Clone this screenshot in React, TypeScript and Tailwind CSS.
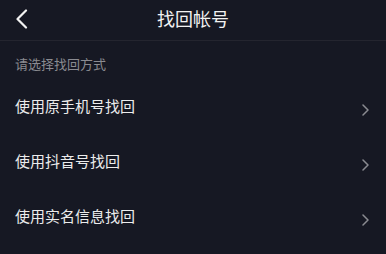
import React from "react";

const options = ["使用原手机号找回", "使用抖音号找回", "使用实名信息找回"];

const font = "font-['Noto_Sans_CJK_SC','Noto_Sans',sans-serif]";

export default function App() {
  return (
    <div className={`w-[386px] h-[254px] bg-[#161823] ${font} overflow-hidden`}>
      <header className="relative flex h-[41px] items-center justify-center border-b border-[#24252f]">
        <svg
          className="absolute left-[15px] top-[9px]"
          width="13"
          height="20"
          viewBox="0 0 13 20"
          fill="none"
        >
          <path d="M11 1.5 L2.5 10 L11 18.5" stroke="#f2f2f2" strokeWidth="2.2" strokeLinecap="round" strokeLinejoin="round" />
        </svg>
        <h1 className="text-[18px] leading-none text-[#f2f2f2] mb-[4px]">找回帐号</h1>
      </header>

      <p className="px-[15px] pt-[15px] text-[13px] leading-[16px] text-[#8a8b91]">
        请选择找回方式
      </p>

      <ul className="mt-[26px] flex flex-col gap-[39px] pl-[15px] pr-[17px]">
        {options.map((label) => (
          <li key={label} className="flex h-[16px] items-center justify-between">
            <span className="text-[15px] leading-[16px] text-[#ececec]">{label}</span>
            <svg className="mt-[8px]" width="7" height="12" viewBox="0 0 7 12" fill="none">
              <path d="M1 1 L6 6 L1 11" stroke="#8a8b91" strokeWidth="1.5" strokeLinecap="round" strokeLinejoin="round" />
            </svg>
          </li>
        ))}
      </ul>
    </div>
  );
}
